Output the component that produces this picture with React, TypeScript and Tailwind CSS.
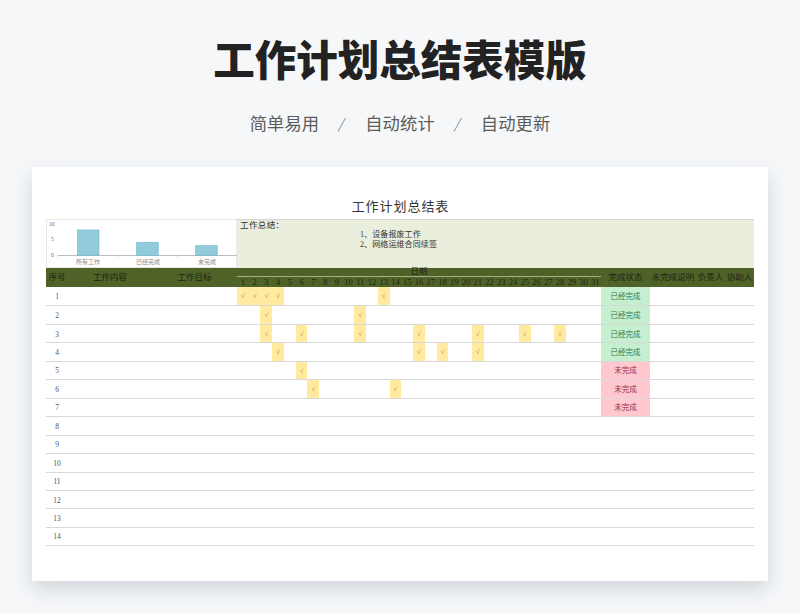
const sans = "font-['Noto_Sans_CJK_SC','Noto_Sans',sans-serif]";
const cjk = "font-['Liberation_Serif','Noto_Sans_CJK_SC',serif]";

const days = Array.from({ length: 31 }, (_, i) => i + 1);
const rows: { ticks: number[]; status?: "done" | "todo" }[] = [
  { ticks: [1, 2, 3, 4, 13], status: "done" },
  { ticks: [3, 11], status: "done" },
  { ticks: [3, 6, 11, 16, 21, 25, 28], status: "done" },
  { ticks: [4, 16, 18, 21], status: "done" },
  { ticks: [6], status: "todo" },
  { ticks: [7, 14], status: "todo" },
  { ticks: [], status: "todo" },
  { ticks: [] },
  { ticks: [] },
  { ticks: [] },
  { ticks: [] },
  { ticks: [] },
  { ticks: [] },
  { ticks: [] },
];

function Chart() {
  const bars = [
    { x: 31.5, y: 11, h: 25.3, label: "所有工作", cx: 42 },
    { x: 90.7, y: 23.3, h: 13, label: "已经完成", cx: 102 },
    { x: 149.7, y: 26.7, h: 9.6, label: "未完成", cx: 161 },
  ];
  return (
    <svg width="191" height="49" viewBox="0 0 191 49" className="block">
      <rect x="0.5" y="0.5" width="190" height="48" fill="#fff" stroke="#e8e8e8" />
      <text x="3" y="6.5" fontSize="5.5" fill="#666" fontFamily="Liberation Serif">10</text>
      <text x="5" y="22" fontSize="5.5" fill="#666" fontFamily="Liberation Serif">5</text>
      <text x="5" y="38" fontSize="5.5" fill="#666" fontFamily="Liberation Serif">0</text>
      <line x1="12" y1="36.5" x2="191" y2="36.5" stroke="#bdbdbd" />
      {[12, 72, 131, 190.5].map((x) => (
        <line key={x} x1={x} y1="36" x2={x} y2="38" stroke="#bdbdbd" strokeWidth="0.6" />
      ))}
      {bars.map((b) => (
        <g key={b.label}>
          <rect x={b.x} y={b.y} width="21.5" height={b.h} fill="#92cbdb" stroke="#72bccf" strokeWidth="0.7" />
          <text x={b.cx} y="45" fontSize="6" fill="#8a8a8a" textAnchor="middle" fontFamily="Noto Sans CJK SC">{b.label}</text>
        </g>
      ))}
    </svg>
  );
}

const gridCols = "grid grid-cols-[22px_84px_85px_364px_49px_46px_29px_29px]";
const dayCols = "grid grid-cols-[repeat(31,minmax(0,1fr))]";

export default function App() {
  return (
    <div className={`w-[800px] h-[613px] overflow-hidden bg-[#f5f7f9] flex flex-col items-center ${sans}`}>
      <h1 className="mt-[26px] h-[64px] leading-[64px] text-[41.5px] font-black text-[#222] whitespace-nowrap">工作计划总结表模版</h1>
      <div className="mt-[22px] h-[22px] flex items-center text-[17.3px] leading-[22px] text-[#5c5c5c] tracking-[0.1px]">
        <span>简单易用</span>
        <span className="mx-[19px] w-[8px] text-center text-[14px] font-light -skew-x-12">/</span>
        <span>自动统计</span>
        <span className="mx-[19px] w-[8px] text-center text-[14px] font-light -skew-x-12">/</span>
        <span>自动更新</span>
      </div>
      <div className="mt-[33px] w-[736px] h-[414px] bg-white px-[14px] shadow-[0_8px_18px_rgba(90,100,110,0.22)]">
        <div className={`pt-[31px] pl-[1px] h-[52px] text-center text-[13px] leading-[17px] tracking-[0.95px] text-[#333] ${cjk}`}>工作计划总结表</div>
        <div className={`flex h-[49px] ${cjk}`}>
          <div className="w-[191px]"><Chart /></div>
          <div className="flex-1 bg-[#e9eedd] border-t border-[#d4d4d4] text-[#333] text-[8px] leading-[9.5px] tracking-[0.1px]">
            <div className="pl-[3px] pt-[1px] text-[8.5px] leading-[9px] tracking-[0.4px]">工作总结：</div>
            <div className="pl-[123px]">
              <div>1、设备报废工作</div>
              <div>2、网络运维合同续签</div>
            </div>
          </div>
        </div>
        <div className={`${gridCols} h-[19px] bg-[#4f6228] text-[#1e2610] text-[8.5px] ${cjk}`}>
          <div className="flex items-center justify-center">序号</div>
          <div className="flex items-center justify-center">工作内容</div>
          <div className="flex items-center justify-center">工作目标</div>
          <div className="flex flex-col">
            <div className="h-[9px] leading-[7px] text-center border-b border-[#a3ad86]">日期</div>
            <div className={`${dayCols} leading-[10px] text-center`}>
              {days.map((d) => <div key={d}>{d}</div>)}
            </div>
          </div>
          <div className="flex items-center justify-center">完成状态</div>
          <div className="flex items-center justify-center whitespace-nowrap">未完成说明</div>
          <div className="flex items-center justify-center whitespace-nowrap">负责人</div>
          <div className="flex items-center justify-center whitespace-nowrap">协助人</div>
        </div>
        {rows.map((r, i) => (
          <div key={i} className={`${gridCols} ${i === 0 ? "h-[19.46px]" : "h-[18.46px]"} border-b border-[#d9d9d9] text-[7.5px] text-[#444] ${cjk}`}>
            <div className="flex items-center justify-center pt-[1px] text-[#555]">{i + 1}</div>
            <div />
            <div />
            <div className={dayCols}>
              {days.map((d) => (
                <div key={d} className={r.ticks.includes(d) ? "bg-[#ffeaa0] text-[#a08a30] text-[7px] flex items-center justify-center pt-[1px]" : ""}>
                  {r.ticks.includes(d) ? "√" : null}
                </div>
              ))}
            </div>
            {r.status === "done" && <div className="bg-[#c5efce] text-[#3c7a3f] flex items-center justify-center pt-[1px]">已经完成</div>}
            {r.status === "todo" && <div className="bg-[#ffc7ce] text-[#9c2f3c] flex items-center justify-center pt-[1px]">未完成</div>}
            {!r.status && <div />}
            <div />
            <div />
            <div />
          </div>
        ))}
      </div>
    </div>
  );
}
